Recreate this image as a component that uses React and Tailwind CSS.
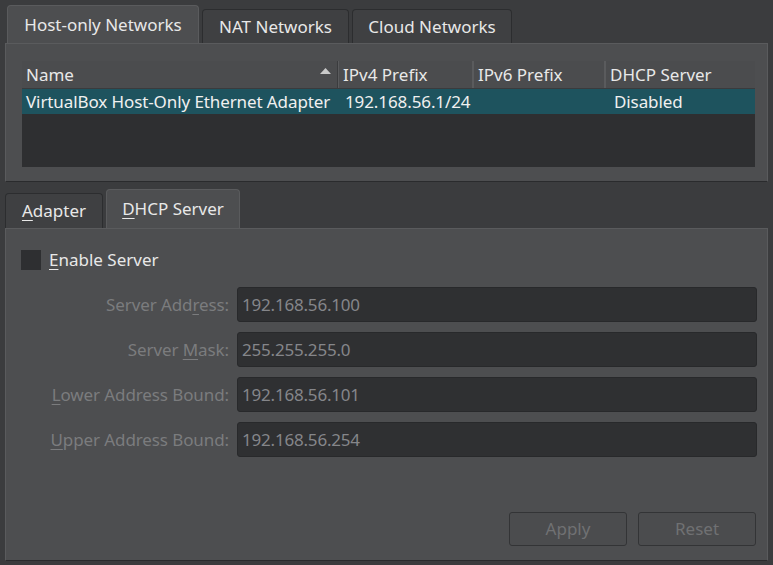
import React from 'react';

const font = { fontFamily: '"Noto Sans", "Open Sans", sans-serif' };

function U({ children }) {
  return <span className="underline underline-offset-[3px] decoration-1">{children}</span>;
}

function FormRow({ label, value }) {
  return (
    <div className="flex items-center h-[35px]">
      <div className="w-[218px] pr-[4px] text-right text-[17px] tracking-[-0.1px] text-[#7b7c7e] whitespace-nowrap">{label}</div>
      <div className="flex-1 ml-[4px] h-full rounded-[3px] bg-[#2f3032] border border-[#28292b] flex items-center px-[4px] text-[17px] tracking-[-0.2px] text-[#85868a]">
        {value}
      </div>
    </div>
  );
}

export default function App() {
  const cols = [
    { name: 'Name', w: 'w-[316px]', sort: true },
    { name: 'IPv4 Prefix', w: 'w-[135px]' },
    { name: 'IPv6 Prefix', w: 'w-[132px]' },
    { name: 'DHCP Server', w: 'flex-1' },
  ];

  return (
    <div style={font} className="w-[773px] h-[565px] bg-[#3b3c3e] px-[5px] flex flex-col overflow-hidden">
      {/* top tabs */}
      <div className="flex items-end h-[43px] pl-[2px] gap-[3px]">
        <div className="h-[38px] w-[192px] rounded-t-[4px] bg-[#4d4e50] border border-b-0 border-[#5a5b5d] flex items-center justify-center text-[17px] text-[#e8e8e8]">
          Host-only Networks
        </div>
        <div className="h-[34px] w-[147px] rounded-t-[4px] bg-[#3f4042] border border-b-0 border-[#2c2d2f] flex items-center justify-center text-[17px] text-[#e8e8e8]">
          NAT Networks
        </div>
        <div className="h-[34px] w-[160px] rounded-t-[4px] bg-[#3f4042] border border-b-0 border-[#2c2d2f] flex items-center justify-center text-[17px] text-[#e8e8e8]">
          Cloud Networks
        </div>
      </div>

      {/* networks pane */}
      <div className="h-[139px] bg-[#4d4e50] border border-[#5a5b5d] border-b-[#2a2b2d] pt-[17px] pl-[16px] pr-[12px] pb-[14px] flex">
        <div className="flex-1 bg-[#2e2f31] flex flex-col">
          <div className="h-[28px] flex bg-[#4b4c4e] border-b border-[#3a3b3d]">
            {cols.map((c, i) => (
              <div
                key={c.name}
                className={`${c.w} relative flex items-center pl-[4px] pr-[6px] text-[17px] text-[#e8e8e8] ${i < 3 ? 'border-r border-[#3b3c3e]' : ''} ${i > 0 ? 'border-l border-[#5a5b5d]' : ''}`}
              >
                <span className="flex-1 whitespace-nowrap">{c.name}</span>
                {c.sort && (
                  <svg width="11" height="6" viewBox="0 0 11 6" className="mb-[8px]">
                    <path d="M0 6 L5.5 0 L11 6 Z" fill="#c9c9c9" />
                  </svg>
                )}
              </div>
            ))}
          </div>
          <div className="h-[25px] flex bg-[#1e535e] text-[17px] tracking-[-0.1px] text-[#f0f0f0] items-center">
            <div className="w-[318px] pl-[4px] whitespace-nowrap">VirtualBox Host-Only Ethernet Adapter</div>
            <div className="w-[135px] pl-[5px] whitespace-nowrap">192.168.56.1/24</div>
            <div className="w-[133px]"></div>
            <div className="flex-1 pl-[6px]">Disabled</div>
          </div>
        </div>
      </div>

      {/* lower tabs */}
      <div className="flex items-end h-[46px] gap-[3px] mt-0">
        <div className="h-[35px] w-[98px] rounded-t-[4px] bg-[#3f4042] border border-b-0 border-[#2c2d2f] flex items-center justify-center text-[17px] text-[#e8e8e8]">
          <span><U>A</U>dapter</span>
        </div>
        <div className="h-[39px] w-[134px] rounded-t-[4px] bg-[#4d4e50] border border-b-0 border-[#5a5b5d] flex items-center justify-center text-[17px] text-[#e8e8e8]">
          <span><U>D</U>HCP Server</span>
        </div>
      </div>

      {/* DHCP pane */}
      <div className="h-[333px] bg-[#4d4e50] border border-[#5a5b5d] border-b-[#2a2b2d] flex flex-col px-[9px]">
        <div className="flex items-center mt-[21px] pl-[6px] h-[20px]">
          <div className="w-[20px] h-[20px] bg-[#2e2f31]"></div>
          <div className="ml-[8px] text-[17px] text-[#e8e8e8]"><U>E</U>nable Server</div>
        </div>
        <div className="flex flex-col gap-[10px] mt-[17px] pr-[1px]">
          <FormRow label={<span>Server Add<U>r</U>ess:</span>} value="192.168.56.100" />
          <FormRow label={<span>Server <U>M</U>ask:</span>} value="255.255.255.0" />
          <FormRow label={<span><U>L</U>ower Address Bound:</span>} value="192.168.56.101" />
          <FormRow label={<span><U>U</U>pper Address Bound:</span>} value="192.168.56.254" />
        </div>
        <div className="flex-1"></div>
        <div className="flex justify-end gap-[11px] pr-[2px] mb-[14px]">
          <div className="w-[118px] h-[34px] rounded-[3px] bg-[#4b4c4e] border border-[#333436] flex items-center justify-center text-[17px] text-[#707173]">Apply</div>
          <div className="w-[118px] h-[34px] rounded-[3px] bg-[#4b4c4e] border border-[#333436] flex items-center justify-center text-[17px] text-[#707173]">Reset</div>
        </div>
      </div>
    </div>
  );
}
